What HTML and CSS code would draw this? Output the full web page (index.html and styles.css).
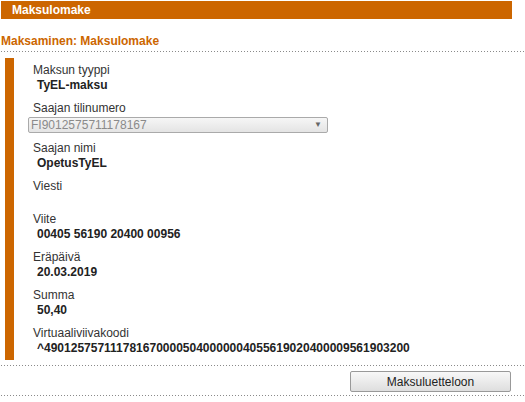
FILE: index.html
```html
<!DOCTYPE html>
<html lang="fi">
<head>
<meta charset="utf-8">
<title>Maksulomake</title>
<link rel="stylesheet" href="styles.css">
</head>
<body>
<div class="page">
  <div class="header">Maksulomake</div>
  <h1 class="title">Maksaminen: Maksulomake</h1>
  <div class="dots"></div>
  <div class="form">
    <div class="field">
      <div class="label">Maksun tyyppi</div>
      <div class="value">TyEL-maksu</div>
    </div>
    <div class="field">
      <div class="label">Saajan tilinumero</div>
      <div class="select"><span>FI9012575711178167</span><span class="arrow">▼</span></div>
    </div>
    <div class="field">
      <div class="label">Saajan nimi</div>
      <div class="value">OpetusTyEL</div>
    </div>
    <div class="field">
      <div class="label">Viesti</div>
      <div class="value empty"></div>
    </div>
    <div class="field">
      <div class="label">Viite</div>
      <div class="value">00405 56190 20400 00956</div>
    </div>
    <div class="field">
      <div class="label">Eräpäivä</div>
      <div class="value">20.03.2019</div>
    </div>
    <div class="field">
      <div class="label">Summa</div>
      <div class="value">50,40</div>
    </div>
    <div class="field">
      <div class="label">Virtuaaliviivakoodi</div>
      <div class="value">^490125757111781670000504000000405561902040000956190​3200</div>
    </div>
  </div>
  <div class="dots"></div>
  <div class="actions">
    <button class="btn" type="button">Maksuluetteloon</button>
  </div>
  <div class="dots"></div>
</div>
</body>
</html>
```
FILE: styles.css
```css
html, body {
  margin: 0;
  padding: 0;
  background: #fff;
}
body {
  font-family: "Liberation Sans", Arial, sans-serif;
  font-size: 12px;
  color: #333;
}
.page {
  width: 525px;
}
.header {
  margin: 1px 13px 0 1px;
  height: 18px;
  line-height: 18px;
  background: #cc6600;
  color: #fff;
  font-weight: bold;
  padding-left: 11px;
}
.title {
  margin: 0;
  padding: 15px 0 0 1px;
  height: 17px;
  line-height: 14px;
  font-size: 12px;
  font-weight: bold;
  color: #cc6600;
}
.dots {
  height: 1px;
  margin-left: 1px;
  background: repeating-linear-gradient(to right, #8a8a8a 0 1px, transparent 1px 3px);
}
.form {
  margin: 6px 0 5px 5px;
  border-left: 9px solid #cc6600;
  padding: 5px 0 4px 19px;
}
.field {
  margin-bottom: 8px;
}
.field:last-child {
  margin-bottom: 0;
}
.label {
  line-height: 15px;
  color: #333;
}
.value {
  line-height: 15px;
  padding-left: 4px;
  font-weight: bold;
  color: #222;
}
.value.empty {
  height: 10px;
}
.select {
  margin: 1px 0 1px -5px;
  width: 296px;
  height: 14px;
  border: 1px solid #aaa;
  border-radius: 2px;
  background: linear-gradient(#f6f6f6, #e4e4e4);
  color: #8a8a8a;
  line-height: 14px;
  padding-left: 2px;
  display: flex;
  justify-content: space-between;
  box-sizing: content-box;
}
.select .arrow {
  font-size: 8px;
  color: #666;
  padding-right: 5px;
}
.actions {
  display: flex;
  justify-content: flex-end;
  padding: 5px 14px 3px 0;
}
.btn {
  width: 161px;
  height: 21px;
  font-family: "Liberation Sans", Arial, sans-serif;
  font-size: 12px;
  color: #222;
  border: 1px solid #999;
  border-radius: 2px;
  background: linear-gradient(#f8f8f8, #dedede);
  padding: 0;
}
```
